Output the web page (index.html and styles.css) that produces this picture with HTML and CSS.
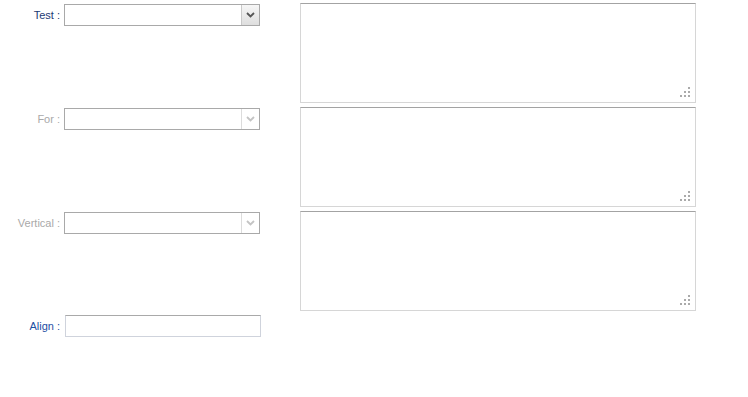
FILE: index.html
```html
<!DOCTYPE html>
<html>
<head>
    <title>Form</title>
    <link rel="stylesheet" href="styles.css">
</head>
<body>
    <div class="form">
        <div class="row">
            <div class="field">
                <label class="label label-main">Test :</label>
                <div class="select">
                    <span class="arrow"><svg width="9" height="6" viewBox="0 0 9 6"><path d="M1 1 L4.5 4.5 L8 1" fill="none" stroke="#555" stroke-width="1.8"/></svg></span>
                </div>
            </div>
            <div class="area"><svg class="grip" width="11" height="11" viewBox="0 0 11 11" fill="#aaa"><rect x="8" y="0" width="2" height="2"/><rect x="4" y="4" width="2" height="2"/><rect x="8" y="4" width="2" height="2"/><rect x="0" y="8" width="2" height="2"/><rect x="4" y="8" width="2" height="2"/><rect x="8" y="8" width="2" height="2"/></svg></div>
        </div>
        <div class="row">
            <div class="field">
                <label class="label label-off">For :</label>
                <div class="select">
                    <span class="arrow arrow-off"><svg width="9" height="6" viewBox="0 0 9 6"><path d="M1 1 L4.5 4.5 L8 1" fill="none" stroke="#c4c4c4" stroke-width="1.8"/></svg></span>
                </div>
            </div>
            <div class="area"><svg class="grip" width="11" height="11" viewBox="0 0 11 11" fill="#aaa"><rect x="8" y="0" width="2" height="2"/><rect x="4" y="4" width="2" height="2"/><rect x="8" y="4" width="2" height="2"/><rect x="0" y="8" width="2" height="2"/><rect x="4" y="8" width="2" height="2"/><rect x="8" y="8" width="2" height="2"/></svg></div>
        </div>
        <div class="row">
            <div class="field">
                <label class="label label-off">Vertical :</label>
                <div class="select">
                    <span class="arrow arrow-off"><svg width="9" height="6" viewBox="0 0 9 6"><path d="M1 1 L4.5 4.5 L8 1" fill="none" stroke="#c4c4c4" stroke-width="1.8"/></svg></span>
                </div>
            </div>
            <div class="area"><svg class="grip" width="11" height="11" viewBox="0 0 11 11" fill="#aaa"><rect x="8" y="0" width="2" height="2"/><rect x="4" y="4" width="2" height="2"/><rect x="8" y="4" width="2" height="2"/><rect x="0" y="8" width="2" height="2"/><rect x="4" y="8" width="2" height="2"/><rect x="8" y="8" width="2" height="2"/></svg></div>
        </div>
        <div class="row row-last">
            <div class="field field-last">
                <label class="label label-link">Align :</label>
                <div class="input"></div>
            </div>
        </div>
    </div>
</body>
</html>
```

FILE: styles.css
```css
body { margin: 0; background: #fff; font-family: "Liberation Sans", Arial, sans-serif; font-size: 11px; }
.form {
    display: flex;
    flex-direction: column;
    gap: 4px;
    padding-top: 3px;
}
.row { display: flex; height: 100px; }
.row-last { height: auto; }
.field {
    width: 260px;
    display: flex;
    align-items: flex-start;
    padding-top: 1px;
}
.field-last { padding-top: 0; width: 261px; }
.label {
    width: 64px;
    padding-right: 4px;
    text-align: right;
    line-height: 22px;
    box-sizing: border-box;
    flex-shrink: 0;
}
.label-main { color: #1b3a73; }
.label-off { color: #a9a9a9; }
.label-link { color: #1d4fa3; width: 65px; padding-right: 5px; }
.select {
    width: 196px;
    height: 22px;
    box-sizing: border-box;
    border: 1px solid #a9a9a9;
    display: flex;
    justify-content: flex-end;
    background: #fff;
}
.arrow {
    width: 17px;
    border-left: 1px solid #c9c9c9;
    background: linear-gradient(#f6f6f6, #dedede);
    display: flex;
    align-items: center;
    justify-content: center;
}
.arrow-off { background: #fff; border-left-color: #dcdcdc; }
.input {
    width: 196px;
    height: 22px;
    box-sizing: border-box;
    border: 1px solid #cfd3dc;
    border-top-color: #a9a9a9;
}
.area {
    position: relative;
    margin-left: 40px;
    width: 396px;
    height: 100px;
    box-sizing: border-box;
    border: 1px solid #d6d6d6;
    border-top-color: #a3a3a3;
}
.grip { position: absolute; right: 4px; bottom: 4px; }
```
